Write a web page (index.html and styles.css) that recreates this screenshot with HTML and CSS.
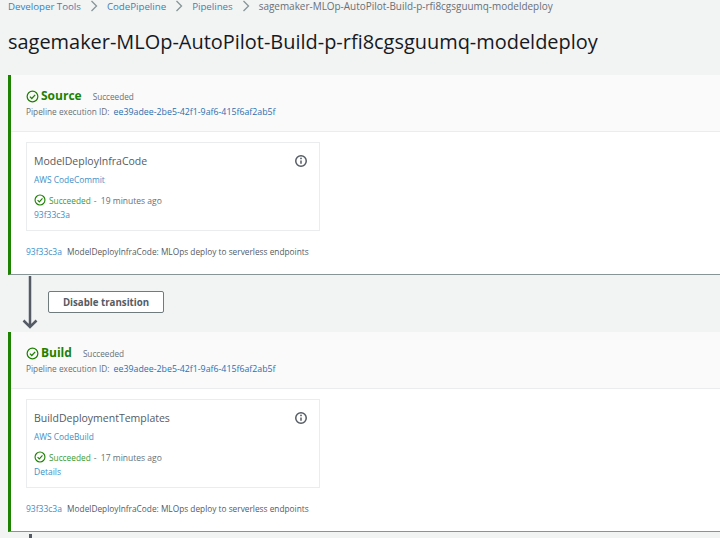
FILE: index.html
```html
<!DOCTYPE html>
<html lang="en">
<head>
    <meta charset="UTF-8">
    <meta name="viewport" content="width=device-width, initial-scale=1.0">
    <title>sagemaker-MLOp-AutoPilot-Build-p-rfi8cgsguumq-modeldeploy</title>
    <link rel="stylesheet" href="styles.css">
</head>
<body>
    <!-- Breadcrumb -->
    <nav class="crumbs">
        <a href="#">Developer Tools</a>
        <svg class="crumb-sep" viewBox="0 0 8 12"><path d="M1.5 1l5 5-5 5"/></svg>
        <a href="#">CodePipeline</a>
        <svg class="crumb-sep" viewBox="0 0 8 12"><path d="M1.5 1l5 5-5 5"/></svg>
        <a href="#">Pipelines</a>
        <svg class="crumb-sep" viewBox="0 0 8 12"><path d="M1.5 1l5 5-5 5"/></svg>
        <span>sagemaker-MLOp-AutoPilot-Build-p-rfi8cgsguumq-modeldeploy</span>
    </nav>

    <h1>sagemaker-MLOp-AutoPilot-Build-p-rfi8cgsguumq-modeldeploy</h1>

    <!-- Source stage -->
    <section class="stage">
        <header class="stage-head">
            <div class="stage-title">
                <svg class="check check-lg" viewBox="0 0 16 16"><circle cx="8" cy="8" r="6.6"/><path d="M4.8 8.2l2.3 2.3 4.2-4.6"/></svg>
                <h2>Source</h2>
                <span class="stage-status">Succeeded</span>
            </div>
            <p class="exec">Pipeline execution ID: <a href="#">ee39adee-2be5-42f1-9af6-415f6af2ab5f</a></p>
        </header>
        <div class="stage-body">
            <div class="action">
                <div class="action-top">
                    <span class="action-name">ModelDeployInfraCode</span>
                    <svg class="info" viewBox="0 0 16 16"><circle cx="8" cy="8" r="6"/><path d="M8 7.500v3.500"/><circle class="dot" cx="8" cy="5" r="1"/></svg>
                </div>
                <a class="provider" href="#">AWS CodeCommit</a>
                <div class="action-status">
                    <svg class="check" viewBox="0 0 16 16"><circle cx="8" cy="8" r="6.6"/><path d="M4.8 8.2l2.3 2.3 4.2-4.6"/></svg>
                    <span class="ok">Succeeded</span>
                    <span class="ago">-&nbsp; 19 minutes ago</span>
                </div>
                <a class="action-link" href="#">93f33c3a</a>
            </div>
            <p class="commit"><a href="#">93f33c3a</a> ModelDeployInfraCode: MLOps deploy to serverless endpoints</p>
        </div>
    </section>

    <!-- Transition -->
    <div class="transition">
        <svg class="arrow" viewBox="0 0 18 56"><path d="M9 1v51M2.500 45.500l6.500 6.500 6.500-6.500"/></svg>
        <button class="btn">Disable transition</button>
    </div>

    <!-- Build stage -->
    <section class="stage">
        <header class="stage-head">
            <div class="stage-title">
                <svg class="check check-lg" viewBox="0 0 16 16"><circle cx="8" cy="8" r="6.6"/><path d="M4.8 8.2l2.3 2.3 4.2-4.6"/></svg>
                <h2>Build</h2>
                <span class="stage-status">Succeeded</span>
            </div>
            <p class="exec">Pipeline execution ID: <a href="#">ee39adee-2be5-42f1-9af6-415f6af2ab5f</a></p>
        </header>
        <div class="stage-body">
            <div class="action">
                <div class="action-top">
                    <span class="action-name">BuildDeploymentTemplates</span>
                    <svg class="info" viewBox="0 0 16 16"><circle cx="8" cy="8" r="6"/><path d="M8 7.500v3.500"/><circle class="dot" cx="8" cy="5" r="1"/></svg>
                </div>
                <a class="provider" href="#">AWS CodeBuild</a>
                <div class="action-status">
                    <svg class="check" viewBox="0 0 16 16"><circle cx="8" cy="8" r="6.6"/><path d="M4.8 8.2l2.3 2.3 4.2-4.6"/></svg>
                    <span class="ok">Succeeded</span>
                    <span class="ago">-&nbsp; 17 minutes ago</span>
                </div>
                <a class="action-link" href="#">Details</a>
            </div>
            <p class="commit"><a href="#">93f33c3a</a> ModelDeployInfraCode: MLOps deploy to serverless endpoints</p>
        </div>
    </section>

    <div class="transition-stub"></div>
</body>
</html>
```

FILE: styles.css
```css
html {
    height: 100%;
    overflow: hidden;
}
body {
    margin: 0;
    height: 538px;
    overflow: hidden;
    background: #f2f3f3;
    color: #16191f;
    font-family: "Open Sans", "Noto Sans", sans-serif;
}
a {
    color: #0073bb;
    text-decoration: none;
}
.crumbs {
    display: flex;
    align-items: center;
    height: 12px;
    padding-left: 8px;
    font-size: 9.700px;
    white-space: nowrap;
}
.crumbs a {
    color: #3f7fb5;
}
.crumbs span {
    font-size: 9.950px;
    color: #687078;
}
.crumb-sep {
    width: 8px;
    height: 12px;
    margin: 0 9px;
    fill: none;
    stroke: #879596;
    stroke-width: 1.3;
}
h1 {
    margin: 18px 0 0 8px;
    height: 45px;
    font-size: 19.950px;
    line-height: 23px;
    font-weight: 400;
    white-space: nowrap;
}
.stage {
    border-left: 3px solid #1d8102;
    border-bottom: 1px solid #879596;
    margin-left: 8px;
    background: #fff;
}
.stage-head {
    height: 57px;
    padding: 13px 0 0 15px;
    box-sizing: border-box;
    background: #fafafa;
    border-bottom: 1px solid #eaeded;
}
.stage-title {
    display: flex;
    align-items: center;
    height: 16px;
}
.stage-title h2 {
    margin: 0 11px 0 2px;
    font-size: 12px;
    line-height: 16px;
    font-weight: 700;
    color: #1d8102;
}
.stage-status {
    font-size: 8.200px;
    color: #687078;
}
.exec {
    margin: 2px 0 0;
    font-size: 8.300px;
    line-height: 12px;
    color: #687078;
    white-space: nowrap;
}
.exec a {
    margin-left: 2px;
    font-size: 8.800px;
    color: #2a6fb0;
}
.stage-body {
    height: 142px;
    padding: 10px 0 0 15px;
    box-sizing: border-box;
}
.action {
    width: 294px;
    height: 89px;
    box-sizing: border-box;
    padding: 11px 0 0 7px;
    background: #fff;
    border: 1px solid #eaeded;
}
.action-top {
    display: flex;
    align-items: center;
    justify-content: space-between;
    height: 14px;
    padding-right: 11px;
}
.action-name {
    font-size: 10.500px;
    color: #545b64;
}
.info {
    width: 14px;
    height: 14px;
    fill: none;
    stroke: #545b64;
    stroke-width: 1.7;
}
.info .dot {
    fill: #545b64;
    stroke: none;
}
.provider {
    display: block;
    margin-top: 6px;
    font-size: 8.400px;
    line-height: 12px;
    color: #3d8fc9;
}
.action-status {
    display: flex;
    align-items: center;
    height: 14px;
    margin-top: 7px;
    font-size: 8.300px;
}
.ok {
    margin-left: 3px;
    color: #3a9a2a;
}
.ago {
    margin-left: 3px;
    font-size: 8.500px;
    color: #687078;
}
.check {
    width: 12px;
    height: 12px;
    fill: none;
    stroke: #1d8102;
    stroke-width: 1.5;
}
.check-lg {
    width: 13px;
    height: 13px;
}
.action-link {
    display: block;
    margin-top: 1px;
    font-size: 8.500px;
    line-height: 14px;
    color: #3d8fc9;
}
.commit {
    margin: 15px 0 0;
    font-size: 8.300px;
    line-height: 12px;
    color: #545b64;
    white-space: nowrap;
}
.commit a {
    margin-right: 3px;
    font-size: 8.500px;
    color: #3d8fc9;
}
.transition {
    display: flex;
    align-items: flex-start;
    height: 57px;
}
.arrow {
    width: 18px;
    height: 56px;
    margin-left: 21px;
    fill: none;
    stroke: #545b64;
    stroke-width: 2.500;
}
.btn {
    width: 116px;
    height: 22px;
    margin: 16px 0 0 9px;
    padding: 0;
    background: #fff;
    border: 1px solid #6f7b7d;
    border-radius: 2px;
    color: #545b64;
    font-family: inherit;
    font-size: 9.700px;
    font-weight: 700;
}
.transition-stub {
    width: 3px;
    height: 5px;
    margin: 2px 0 0 29px;
    background: #545b64;
}
```
